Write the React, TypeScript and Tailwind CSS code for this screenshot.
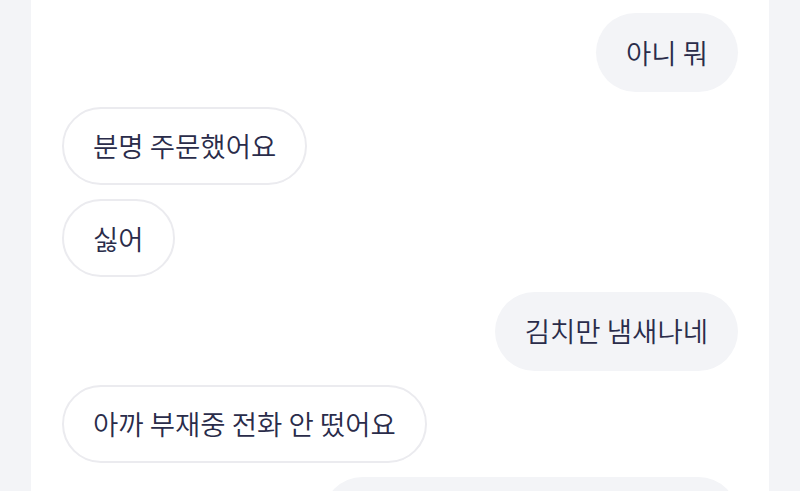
import React from "react";

type Msg = { text: string; me: boolean };

function Bubble({ text, me }: Msg) {
  return (
    <div className={me ? "flex justify-end" : "flex justify-start"}>
      <div
        className={
          me
            ? "h-[79px] flex items-center px-[30px] rounded-full bg-[#f3f4f7] text-[#2a2c4a] whitespace-nowrap"
            : "h-[78px] flex items-center px-[29px] rounded-full bg-white border-2 border-[#ebebef] text-[#2a2c4a] whitespace-nowrap"
        }
      >
        {text}
      </div>
    </div>
  );
}

export default function App() {
  return (
    <div
      className="w-[800px] h-[491px] overflow-hidden bg-[#f3f4f7] flex justify-center"
      style={{ fontFamily: '"Noto Sans CJK KR", "Noto Sans", sans-serif' }}
    >
      <div className="w-[738px] h-full bg-white px-[31px] overflow-hidden">
        <div className="flex flex-col gap-[14.4px] text-[27.5px] font-[350] mt-[-79px]">
          <div className="flex justify-start">
            <div className="h-[78px] w-[130px] rounded-full bg-white border-2 border-[#ebebef]" />
          </div>
          <Bubble text="아니 뭐" me />
          <Bubble text="분명 주문했어요" me={false} />
          <Bubble text="싫어" me={false} />
          <Bubble text="김치만 냄새나네" me />
          <Bubble text="아까 부재중 전화 안 떴어요" me={false} />
          <div className="flex justify-end">
            <div className="h-[79px] w-[415px] rounded-full bg-[#f3f4f7]" />
          </div>
        </div>
      </div>
    </div>
  );
}
